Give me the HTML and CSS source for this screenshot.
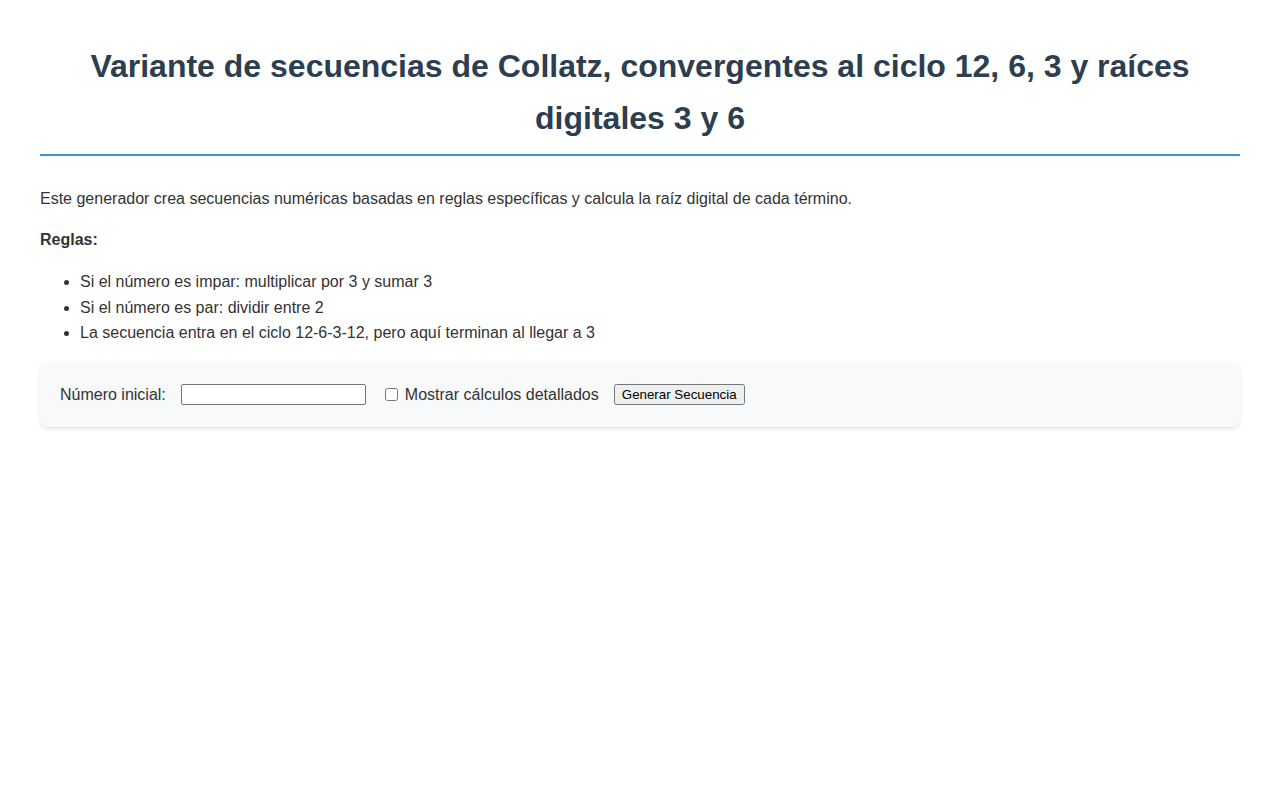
FILE: index.html
```html
<!DOCTYPE html>
<html lang="es">
<head>
  <meta charset="UTF-8">
  <meta name="viewport" content="width=device-width, initial-scale=1.0">
  <title>Variante de secuencias de Collatz</title>
  <link rel="stylesheet" href="styles.css">
</head>
<body>
  <h1>Variante de secuencias de Collatz, convergentes al ciclo 12, 6, 3 y raíces digitales 3 y 6</h1>

  <p>Este generador crea secuencias numéricas basadas en reglas específicas y calcula la raíz digital de cada término.</p>
  <p><strong>Reglas:</strong></p>
  <ul>
    <li>Si el número es impar: multiplicar por 3 y sumar 3</li>
    <li>Si el número es par: dividir entre 2</li>
    <li>La secuencia entra en el ciclo 12-6-3-12, pero aquí terminan al llegar a 3</li>
  </ul>

  <div class="controls">
    <label for="startNumber" class="num-label">Número inicial:</label>
    <input type="number" id="startNumber" class="num-input">
    <label class="check-label"><input type="checkbox" id="showDetails" class="check"> Mostrar cálculos detallados</label>
    <button id="generate" class="gen-btn">Generar Secuencia</button>
  </div>
</body>
</html>
```

FILE: styles.css
```css
body {
  font-family: "Liberation Sans", Arial, sans-serif;
  max-width: 1200px;
  margin: 0 auto;
  padding: 20px;
  line-height: 1.6;
  color: #333333;
  background-color: #ffffff;
}

h1 {
  color: #2c3e50;
  text-align: center;
  font-size: 32px;
  margin: 21.44px 0 30px 0;
  padding-bottom: 10px;
  border-bottom: 2px solid #3498db;
}

p {
  margin: 16px 0;
}

ul {
  margin: 16px 0;
  padding-left: 40px;
}

.controls {
  display: flex;
  align-items: center;
  background-color: #f8f9fa;
  padding: 20px;
  border-radius: 8px;
  box-shadow: 0 2px 4px rgba(0, 0, 0, 0.1);
  margin-bottom: 20px;
}

.num-label {
  margin-right: 15px;
}

.num-input {
  width: 185px;
  height: 21px;
  box-sizing: border-box;
  margin: 0 19px 0 0;
  font-family: "Liberation Sans", Arial, sans-serif;
  font-size: 13.33px;
}

.check-label {
  display: flex;
  align-items: center;
  margin-right: 15px;
}

.check {
  width: 13px;
  height: 13px;
  margin: 0 7px 0 0;
}

.gen-btn {
  width: 131px;
  height: 21px;
  padding: 1px 6px;
  font-family: "Liberation Sans", Arial, sans-serif;
  font-size: 13.33px;
}
```
